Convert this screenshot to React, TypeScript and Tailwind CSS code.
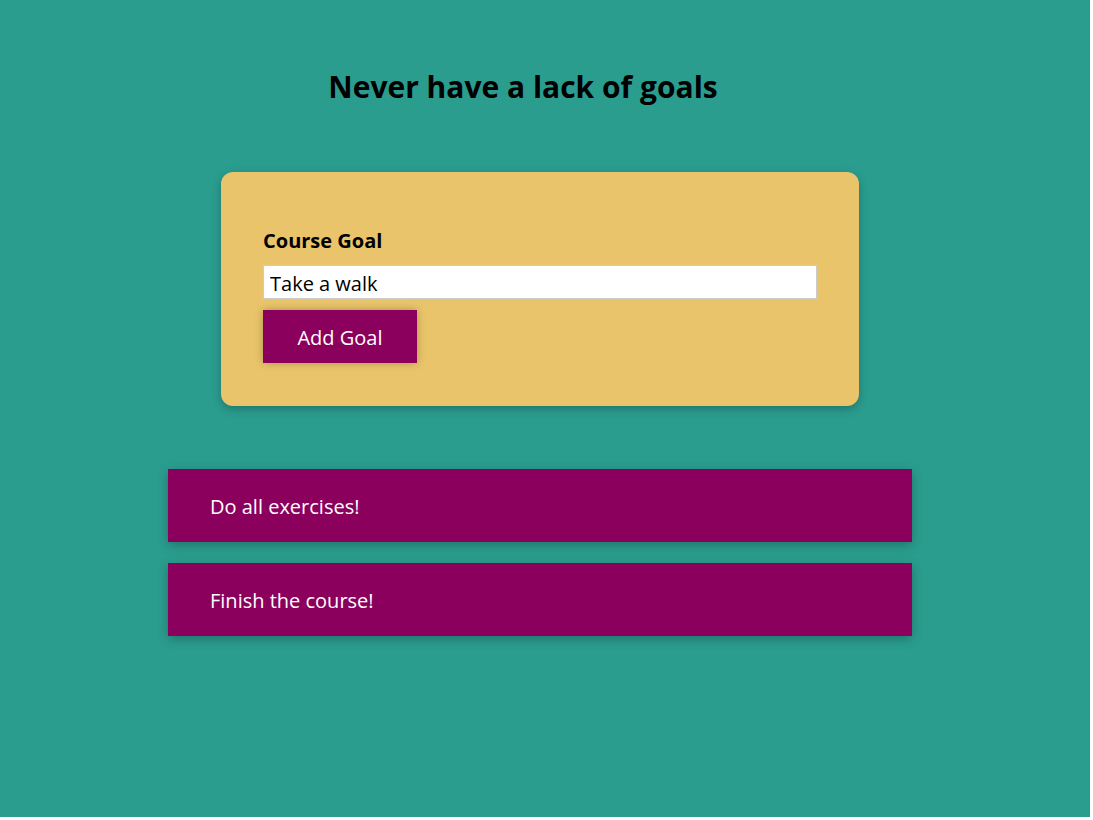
import { useState } from "react";

const initialGoals = [
  { id: "g1", text: "Do all exercises!" },
  { id: "g2", text: "Finish the course!" },
];

function GoalForm() {
  const [value, setValue] = useState("Take a walk");

  return (
    <form
      className="ml-[221px] w-[638px] rounded-[12px] bg-[#e9c46a] px-[42px] pt-[55px] pb-[43px] shadow-[0_3px_10px_rgba(0,0,0,0.26)]"
      onSubmit={(e) => e.preventDefault()}
    >
      <label className="block text-[20px] font-bold leading-[28px] text-black">
        Course Goal
      </label>
      <input
        type="text"
        value={value}
        onChange={(e) => setValue(e.target.value)}
        className="mt-[10px] block h-[34px] w-full border border-[#ccc] bg-white px-[6px] pt-[2px] text-[20px] text-black outline-none"
      />
      <button
        type="submit"
        className="mt-[11px] h-[53px] w-[154px] bg-[#8b005d] pt-[2px] text-[20px] text-white shadow-[0_0_8px_rgba(0,0,0,0.26)]"
      >
        Add Goal
      </button>
    </form>
  );
}

export default function App() {
  return (
    <div className="h-[820px] w-[1093px] bg-white font-['Open_Sans',sans-serif]">
      <div className="h-[817px] w-[1090px] overflow-hidden bg-[#2a9d8f] pt-[66px]">
        {/* title */}
        <h2 className="pr-[44px] text-center text-[30px] font-bold leading-[42px] text-black">
          Never have a lack of goals
        </h2>

        <div className="mt-[64px]">
          <GoalForm />
        </div>

        {/* goal list */}
        <ul className="mt-[63px] ml-[168px] flex w-[744px] flex-col gap-[21px]">
          {initialGoals.map((goal) => (
            <li
              key={goal.id}
              className="flex h-[73px] items-center bg-[#8b005d] px-[42px] pt-[3px] text-[20px] text-white shadow-[0_3px_10px_rgba(0,0,0,0.26)]"
            >
              {goal.text}
            </li>
          ))}
        </ul>
      </div>
    </div>
  );
}
